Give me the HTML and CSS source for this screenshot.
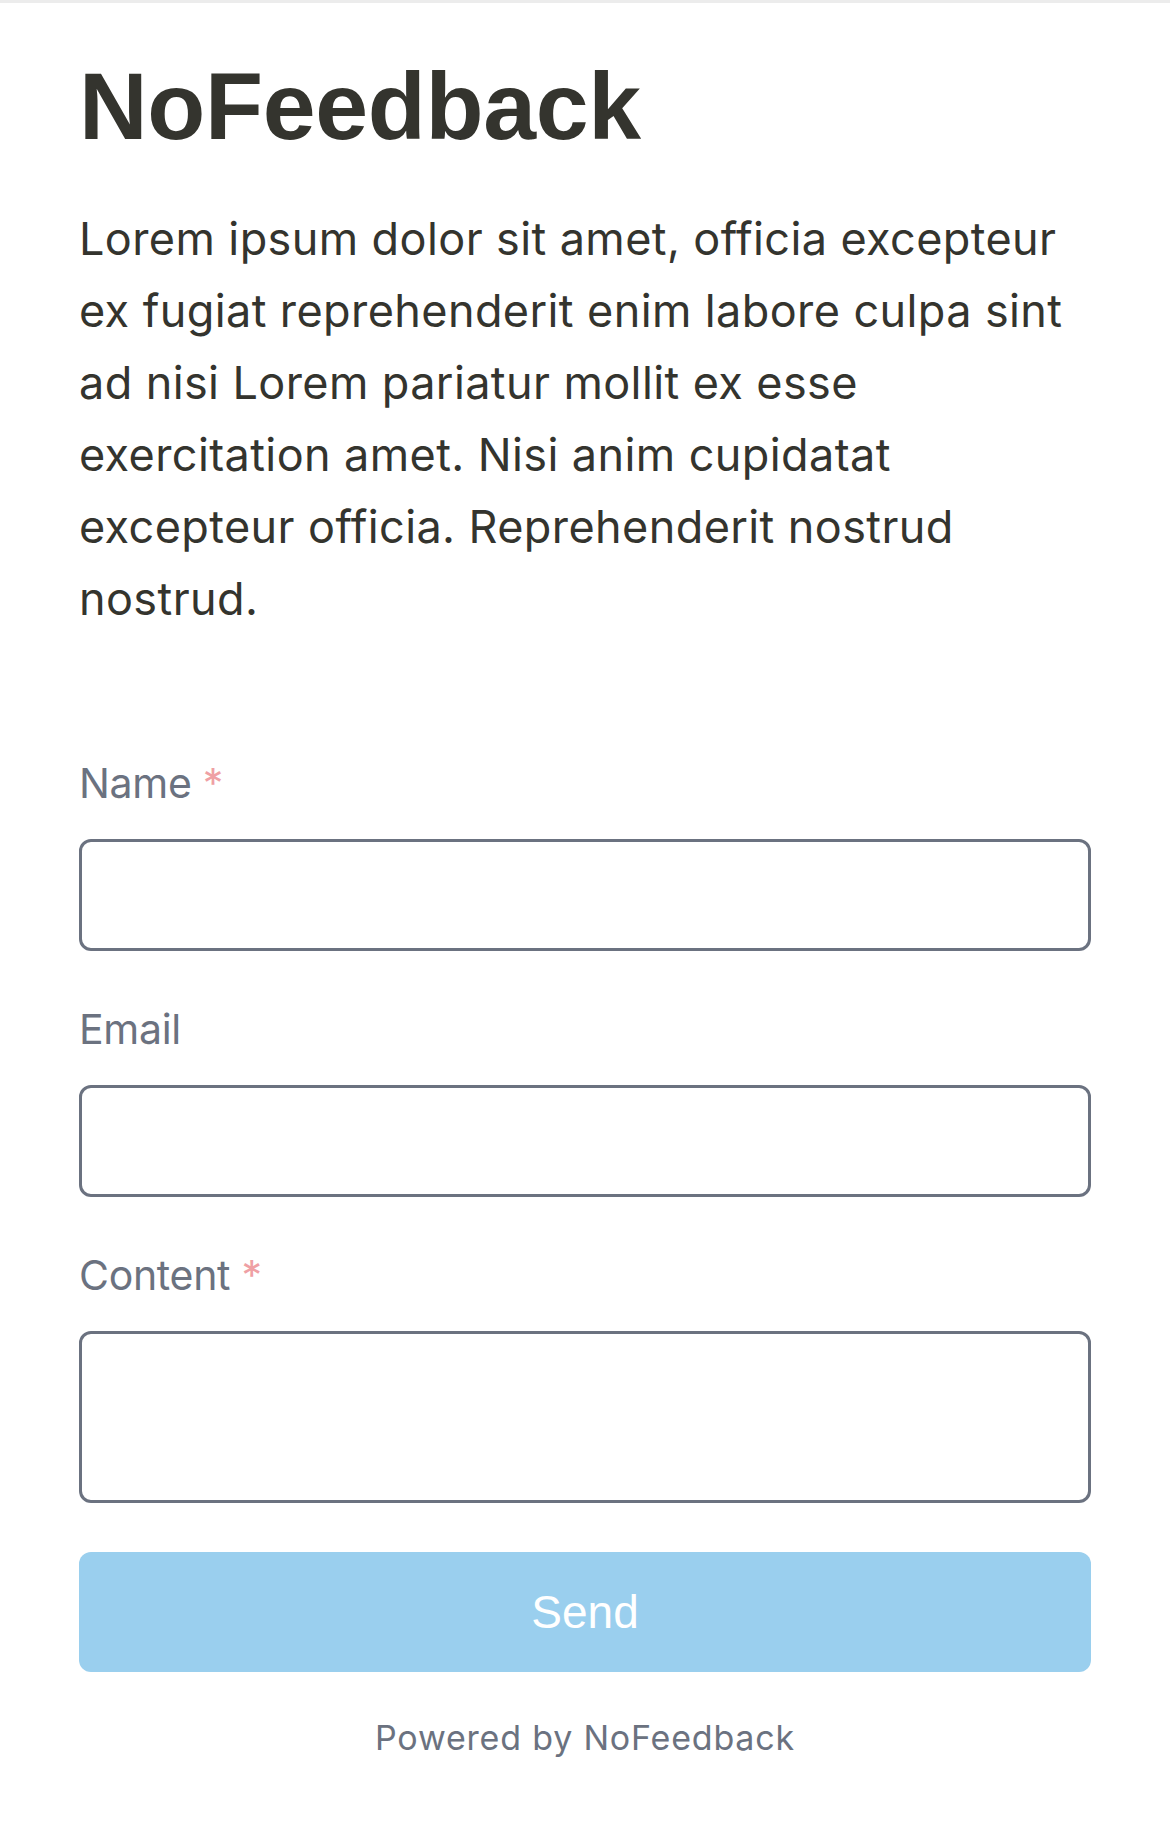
FILE: index.html
```html
<!DOCTYPE html>
<html>
	<head>
		<meta http-equiv="Content-Type" content="text/html; charset=UTF-8">
		<title>NoFeedback</title>
		<link rel="stylesheet" href="styles.css">
	</head>
	<body>
		<div class="page">
			<h1 class="title">NoFeedback</h1>
			<p class="intro">Lorem ipsum dolor sit amet, officia excepteur ex fugiat reprehenderit enim labore culpa sint ad nisi Lorem pariatur mollit ex esse exercitation amet. Nisi anim cupidatat excepteur officia. Reprehenderit nostrud nostrud.</p>

			<form class="feedback" method="post" action="#">
				<div class="field">
					<label for="name">Name <span class="req">*</span></label>
					<input type="text" name="name" id="name" class="box">
				</div>
				<div class="field">
					<label for="email">Email</label>
					<input type="email" name="email" id="email" class="box">
				</div>
				<div class="field">
					<label for="content">Content <span class="req">*</span></label>
					<textarea name="content" id="content" class="box area"></textarea>
				</div>
				<button type="submit" class="send">Send</button>
			</form>

			<div class="powered">Powered by NoFeedback</div>
		</div>
	</body>
</html>
```

FILE: styles.css
```css
body {
	margin : 0;
	border-top : 3px solid #ececec;
	background-color : #ffffff;
	font-family : Inter, "Noto Sans", sans-serif;
}
.page {
	padding : 56px 79px 0 79px;
}
.title {
	margin : 0;
	font-family : "Liberation Sans", Arial, sans-serif;
	font-weight : bold;
	font-size : 95px;
	line-height : 95px;
	color : #34342e;
	letter-spacing : -0.3px;
}
.intro {
	margin : 49px 0 0 0;
	padding-right : 10px;
	font-size : 45px;
	line-height : 72px;
	color : #34342e;
	letter-spacing : 0.4px;
}
.feedback {
	margin-top : 117px;
}
.field {
	margin-bottom : 47px;
}
.field label {
	display : block;
	font-size : 41px;
	line-height : 63px;
	margin-bottom : 24px;
	color : #6b7280;
	letter-spacing : -0.3px;
}
.req {
	color : #efa0a4;
}
.box {
	display : block;
	box-sizing : border-box;
	width : 100%;
	height : 112px;
	margin : 0;
	border : 3px solid #6b7280;
	border-radius : 12px;
	background : #ffffff;
	font-family : inherit;
	font-size : 42px;
	outline : none;
}
.box.area {
	height : 172px;
	resize : none;
}
.field:last-of-type {
	margin-bottom : 49px;
}
.send {
	display : block;
	width : 100%;
	height : 120px;
	border : none;
	border-radius : 12px;
	background-color : #9acfee;
	color : #ffffff;
	font-family : "Liberation Sans", Arial, sans-serif;
	font-size : 46px;
	cursor : pointer;
}
.powered {
	margin-top : 40px;
	text-align : center;
	font-size : 34px;
	line-height : 51px;
	color : #6b7280;
	letter-spacing : 0.8px;
}
```
